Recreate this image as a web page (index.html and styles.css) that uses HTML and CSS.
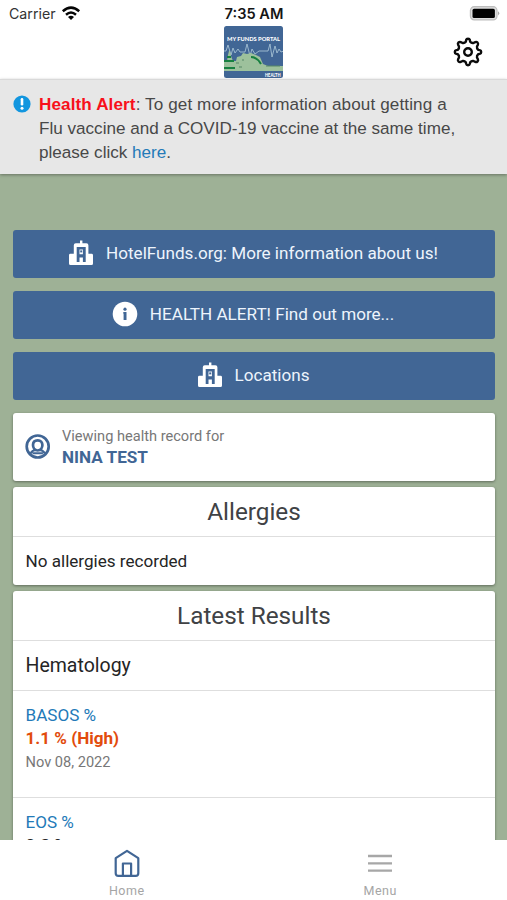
FILE: index.html
```html
<!DOCTYPE html>
<html lang="en">
<head>
<meta charset="utf-8">
<title>My Funds Portal</title>
<link rel="stylesheet" href="styles.css">
</head>
<body>
<div class="app">
  <header class="header">
    <div class="status">
      <div class="carrier"><span>Carrier</span>
        <svg width="20" height="15" viewBox="0 0 20 15"><g fill="none" stroke="#050505" stroke-width="2.5"><path d="M1.8 5.2Q10-2 18.2 5.2"/><path d="M5 8.7Q10 4.4 15 8.7"/></g><path d="M7 10.9Q10 8.7 13 10.9L10 14Z" fill="#050505"/></svg>
      </div>
      <div class="clock">7:35 AM</div>
      <svg class="battery" width="31" height="15" viewBox="0 0 31 15"><rect x="1.4" y=".7" width="26.6" height="13.2" rx="3.8" fill="#ddd" stroke="#bdbdbd" stroke-width="1.2"/><rect x="3.5" y="2.8" width="22.4" height="9.2" rx="1.6" fill="#000"/><path d="M29 5.2Q31.6 7.3 29 9.6Z" fill="#aaa"/></svg>
    </div>
    <div class="bar">
      <svg class="logo" width="59" height="52" viewBox="0 0 59 52">
        <clipPath id="frame"><rect width="59" height="52" rx="2.5"/></clipPath>
        <g clip-path="url(#frame)">
          <rect width="59" height="52" fill="#416695"/>
          <path d="M0 25h2l2-6 3 10 2-7 2 5 3-4 2 3h5l2-8 3 12 2-7 3 5 4-3h9l2-7 2 13 3-11 2 7 2-4 2 3 3-1" fill="none" stroke="#a5c1d4" stroke-width=".9"/>
          <path d="M0 45V35h3l1-6 1-4h1l1 5 2 5h3l1-4 4-1 2-3 4 1 4-1 5 2 4 2 3 7 5 2h15v5Z" fill="#9dc19c"/>
          <path d="M0 35h10M3 31h4M0 42h11M27 31q6 0 10 7" fill="none" stroke="#178040" stroke-width="2"/>
          <path d="M12 37h3m3-3h2m-5 7h3m24-1h14" stroke="#568867" stroke-width="1.2"/>
          <text class="logo-title" x="3" y="15.2" textLength="53" lengthAdjust="spacingAndGlyphs">MY FUNDS PORTAL</text>
          <text class="logo-sub" x="41" y="50.6" textLength="15.5" lengthAdjust="spacingAndGlyphs">HEALTH</text>
        </g>
      </svg>
      <svg class="gear" width="32" height="32" viewBox="-16 -16 32 32" fill="none" stroke="#0b0b0b" stroke-width="2.4" stroke-linejoin="round"><path d="M-1.8-11.9Q-1.6-13.2 0-13.2T1.8-11.9L2.2-10.2Q3.5-8.6 5.4-9L7.3-9.9Q8.6-10.5 9.5-9.5T9.9-7.3L9-5.4Q8.6-3.5 10.2-2.2L11.9-1.8Q13.2-1.6 13.2 0T11.9 1.8L10.2 2.2Q8.6 3.5 9 5.4L9.9 7.3Q10.5 8.6 9.5 9.5T7.3 9.9L5.4 9Q3.5 8.6 2.2 10.2L1.8 11.9Q1.6 13.2 0 13.2T-1.8 11.9L-2.2 10.2Q-3.5 8.6-5.4 9L-7.3 9.9Q-8.6 10.5-9.5 9.5T-9.9 7.3L-9 5.4Q-8.6 3.5-10.2 2.2L-11.9 1.8Q-13.2 1.6-13.2 0T-11.9-1.8L-10.2-2.2Q-8.6-3.5-9-5.4L-9.9-7.3Q-10.5-8.6-9.5-9.5T-7.3-9.9L-5.4-9Q-3.5-8.6-2.2-10.2Z"/><circle r="3.8"/></svg>
    </div>
  </header>
  <section class="alert">
    <svg class="alert-icon" width="18" height="18" viewBox="0 0 18 18"><circle cx="9" cy="9" r="8.6" fill="#1296df"/><path d="M9 4.2v5" stroke="#fff" stroke-width="2.6" stroke-linecap="round"/><circle cx="9" cy="13.2" r="1.5" fill="#fff"/></svg>
    <p><span class="line-one"><strong>Health Alert</strong>: To get more information about getting a</span><br>Flu vaccine and a COVID-19 vaccine at the same time,<br>please click <a>here</a>.</p>
  </section>
  <main class="content">
    <div class="actions">
      <div class="button"><svg width="26" height="26" viewBox="0 0 26 26"><path class="building" d="M12 .5h2.4v2.8h4q2 0 2 2v8.5h3.2q1.4 0 1.4 1.4v8.3q0 1.5-1.5 1.5h-21Q1 25 1 23.5v-8.3q0-1.4 1.4-1.4h3.4V5.3q0-2 2-2h4.2Z"/><path fill="#416695" fill-rule="evenodd" d="M8.700 7h9V22h-2.800v-4.500h-3.400V22H8.700ZM11.500 9.500v4.800h3.400V9.500Z"/><path fill="#416695" d="M12.200 10.400h2v2h-2z"/></svg><span>HotelFunds.org: More information about us!</span></div>
      <div class="button"><svg width="26" height="26" viewBox="0 0 26 26"><circle cx="13" cy="13" r="12.3" fill="#fff"/><path d="M11.300 11h3.200v8.100h-2.900v-6.400h-.3Z" fill="#416695"/><circle cx="13" cy="8.200" r="1.600" fill="#416695"/></svg><span>HEALTH ALERT! Find out more...</span></div>
      <div class="button"><svg width="26" height="26" viewBox="0 0 26 26"><path class="building" d="M12 .5h2.4v2.8h4q2 0 2 2v8.5h3.2q1.4 0 1.4 1.4v8.3q0 1.5-1.5 1.5h-21Q1 25 1 23.5v-8.3q0-1.4 1.4-1.4h3.4V5.3q0-2 2-2h4.2Z"/><path fill="#416695" fill-rule="evenodd" d="M8.700 7h9V22h-2.800v-4.500h-3.400V22H8.700ZM11.500 9.500v4.800h3.400V9.500Z"/><path fill="#416695" d="M12.200 10.400h2v2h-2z"/></svg><span>Locations</span></div>
    </div>
    <section class="card person">
      <svg width="26" height="26" viewBox="0 0 26 26" fill="none" stroke="#416695" stroke-width="2.7"><circle cx="12.7" cy="12.5" r="11"/><path d="M12.700 6.300c-3 0-4.700 2-4.700 4.800s1.800 5.400 4.700 5.400 4.700-2.600 4.700-5.400-1.700-4.800-4.700-4.800Z"/><path d="M5.500 19.600q1-3 4.900-3.700m4.600 0q3.900.7 4.900 3.700M7.500 19.200h10.400" stroke-width="2"/></svg>
      <div><div class="viewing">Viewing health record for</div><div class="name">NINA TEST</div></div>
    </section>
    <section class="card allergies"><h2>Allergies</h2><p class="empty">No allergies recorded</p></section>
    <section class="card results">
      <h2>Latest Results</h2>
      <h3>Hematology</h3>
      <div class="result"><div class="test">BASOS %</div><div class="value high">1.1 % (High)</div><div class="date">Nov 08, 2022</div></div>
      <div class="result"><div class="test">EOS %</div><div class="value normal">0.3 %</div></div>
    </section>
  </main>
  <nav class="tabs">
    <div class="tab"><svg width="28" height="30" viewBox="0 0 28 30" fill="none" stroke="#416695" stroke-width="2.2" stroke-linejoin="round"><path d="M14 2.800 25.300 10.200V25.300q0 2.600-2.600 2.600H5.300Q2.700 27.900 2.700 25.300V10.200Z"/><path d="M9.900 27.300V15.500h8.200v11.800"/></svg><span>Home</span></div>
    <div class="tab"><svg width="28" height="30" viewBox="0 0 28 30" stroke="#a7a7a7" stroke-width="2.3"><path d="M2 8h24M2 15.300h24M2 22.600h24"/></svg><span>Menu</span></div>
  </nav>
</div>
</body>
</html>
```
FILE: styles.css
```css
* { box-sizing: border-box; }
body { margin: 0; font-family: Roboto, "Liberation Sans", sans-serif; color: #252525; }
p, h2, h3 { margin: 0; font-weight: 400; }
svg { display: block; flex-shrink: 0; }
.app { width: 507px; height: 900px; display: flex; flex-direction: column; overflow: hidden; background: #9eb196; }
.header { height: 79px; flex-shrink: 0; background: #fff; }
.status { height: 26px; display: grid; grid-template-columns: 1fr 80px 1fr; align-items: center; padding: 1px 7px 0 8px; font-family: Inter, sans-serif; font-size: 14.2px; }
.carrier { display: flex; align-items: center; gap: 5px; padding-left: 1px; color: #333; }
.clock { text-align: center; font-size: 14.6px; font-weight: 600; color: #151515; white-space: nowrap; }
.battery { justify-self: end; }
.bar { display: grid; grid-template-columns: 1fr 59px 1fr; }
.logo { grid-column: 2; }
.gear { margin: 10px 23px 0 0; justify-self: end; }
.logo-title, .logo-sub { font-family: Lato, sans-serif; font-weight: 900; fill: #fff; }
.logo-title { font-size: 6.3px; }
.logo-sub { font-size: 4.8px; }
.alert { height: 95px; flex-shrink: 0; display: flex; gap: 8px; padding: 12px 13px 0; background: #e7e7e7; border-top: 1px solid #d9d9d9; box-shadow: 0 1px 3px rgba(0,0,0,.35); font-family: "Liberation Sans", sans-serif; font-size: 17.1px; line-height: 24px; color: #484848; white-space: nowrap; z-index: 1; }
.alert p { padding-top: 1px; }
.line-one { letter-spacing: .11px; }
.alert-icon { margin-top: 3px; }
.alert strong { color: #f8101b; }
.alert a { color: #237ab8; }
.content { flex: 1; min-height: 0; overflow: hidden; padding: 55.5px 12px 0 13px; }
.actions { display: flex; flex-direction: column; gap: 12.5px; margin-bottom: 12.5px; }
.button { height: 48.5px; padding: 0 2px 1px 0; border-radius: 3px; background: #416695; color: #edf4fc; display: flex; align-items: center; justify-content: center; gap: 12px; font-size: 17.1px; white-space: nowrap; }
.building { fill: #fff; }
.card { background: #fff; border-radius: 3px; box-shadow: 0 1px 3px rgba(0,0,0,.4); overflow: hidden; }
.person { height: 68px; display: flex; gap: 11px; align-items: center; padding: 0 12px; }
.viewing { font-size: 14.6px; line-height: 20px; color: #777; }
.name { font-size: 17.1px; line-height: 22px; font-weight: 700; color: #416695; }
.allergies { margin-top: 6px; height: 98px; }
h2 { height: 50px; border-bottom: 1px solid #dedede; text-align: center; font-size: 24.3px; line-height: 50px; color: #404245; }
.empty { padding: 0 12.5px; font-size: 17.1px; line-height: 48px; }
.results { margin-top: 6px; height: 270px; }
h3 { height: 50px; border-bottom: 1px solid #dedede; padding: 0 12.5px; font-size: 19.5px; line-height: 49px; }
.result { height: 107.5px; border-bottom: 1px solid #dedede; padding: 12px 12.5px 0; font-size: 17.1px; }
.test { line-height: 24px; color: #237ab8; }
.value { line-height: 23px; font-weight: 700; }
.high { color: #e24b0c; }
.normal { line-height: 22px; }
.date { font-size: 14.6px; line-height: 25px; color: #777; }
.tabs { height: 60px; flex-shrink: 0; background: #fff; display: flex; }
.tab { flex: 1; display: flex; flex-direction: column; align-items: center; padding-top: 8px; color: #a5a5a5; font-size: 12.5px; line-height: 15px; letter-spacing: .5px; }
.tab span { margin-top: 5px; }
```
